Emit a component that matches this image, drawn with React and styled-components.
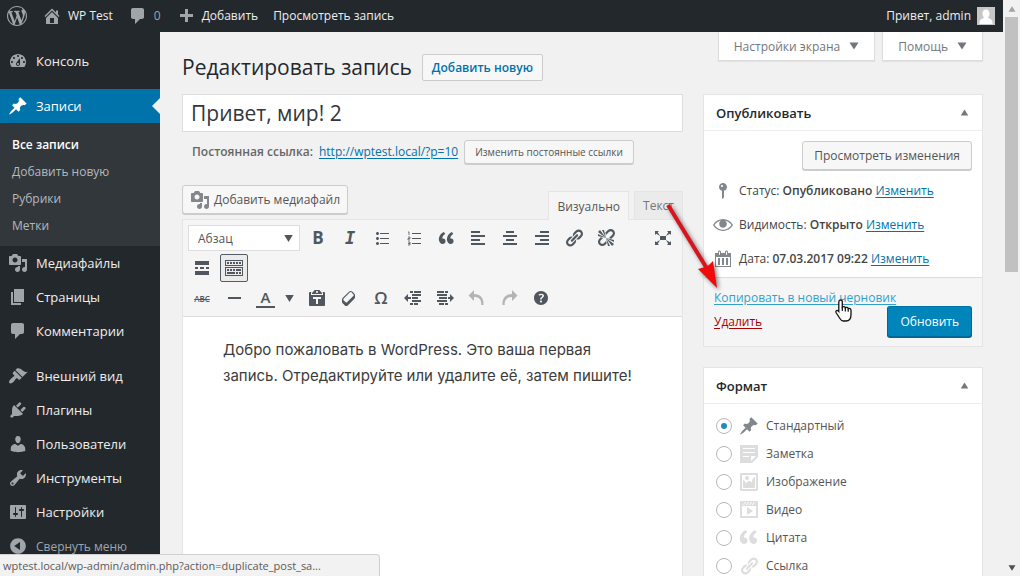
import React from "react";
import styled, { createGlobalStyle, css } from "styled-components";

const UI = `"Open Sans", "Noto Sans", sans-serif`;

const GlobalStyle = createGlobalStyle`
  *, *::before, *::after { box-sizing: border-box; }
  html, body { margin: 0; }
  body { background: #f1f1f1; color: #444; font: 12px/18px ${UI}; }
  button, input, select { font-family: inherit; margin: 0; }
  h1, h2, p, ul { margin: 0; padding: 0; font-weight: 400; }
  ul { list-style: none; }
  a { color: #0073aa; text-underline-offset: 2px; }
`;

/* ---------- icons (20 x 20 grid) ---------- */
const PATHS = {
  wordpress:
    "M20 10c0-5.51-4.49-10-10-10C4.48 0 0 4.49 0 10c0 5.52 4.48 10 10 10 5.51 0 10-4.48 10-10zM7.78 15.37L4.37 6.22c.55-.02 1.17-.08 1.17-.08.5-.06.44-1.13-.06-1.11 0 0-1.45.11-2.37.11-.18 0-.37 0-.58-.01C4.12 2.69 6.87 1.11 10 1.11c2.33 0 4.45.87 6.05 2.34-.68-.11-1.65.39-1.65 1.58 0 .74.45 1.36.9 2.1.35.61.55 1.36.55 2.46 0 1.49-1.4 5-1.4 5l-3.03-8.37c.54-.02.82-.17.82-.17.5-.05.44-1.25-.06-1.22 0 0-1.44.12-2.38.12-.87 0-2.33-.12-2.33-.12-.5-.03-.56 1.2-.06 1.22l.92.08 1.26 3.41zM17.41 10c.24-.64.74-1.87.43-4.25.7 1.29 1.05 2.71 1.05 4.25 0 3.29-1.73 6.24-4.4 7.78.97-2.59 1.94-5.2 2.92-7.78zM6.1 18.09C3.12 16.65 1.11 13.53 1.11 10c0-1.3.23-2.48.72-3.59C3.25 10.3 4.67 14.2 6.1 18.09zm4.03-6.63l2.58 6.98c-.86.29-1.76.45-2.71.45-.79 0-1.57-.11-2.29-.33.81-2.38 1.62-4.74 2.42-7.1z",
  home: "M16 8.5l1.53 1.53-1.06 1.06L10 4.6l-6.47 6.49-1.06-1.06L10 2.5l4 4v-2h2v4zm-6-2.46l6 5.99V18H4v-5.97zM12 17v-5H8v5h4z",
  comments: "M5 2h9c1.1 0 2 .9 2 2v7c0 1.1-.9 2-2 2h-2l-5 5v-5H5c-1.1 0-2-.9-2-2V4c0-1.1.9-2 2-2z",
  plus: "M17 8v3h-5v5H9v-5H4V8h5V3h3v5h5z",
  dashboard:
    "M3.76 16h12.48c1.1-1.37 1.76-3.11 1.76-5 0-4.42-3.58-8-8-8s-8 3.58-8 8c0 1.89.66 3.63 1.76 5zM10 4c.55 0 1 .45 1 1s-.45 1-1 1-1-.45-1-1 .45-1 1-1zM6 6c.55 0 1 .45 1 1s-.45 1-1 1-1-.45-1-1 .45-1 1-1zm8 0c.55 0 1 .45 1 1s-.45 1-1 1-1-.45-1-1 .45-1 1-1zm-5.37 5.55L12 7v6c0 1.1-.9 2-2 2s-2-.9-2-2c0-.57.24-1.08.63-1.45zM4 10c.55 0 1 .45 1 1s-.45 1-1 1-1-.45-1-1 .45-1 1-1zm12 0c.55 0 1 .45 1 1s-.45 1-1 1-1-.45-1-1 .45-1 1-1zm-5 3c0-.55-.45-1-1-1s-1 .45-1 1 .45 1 1 1 1-.45 1-1z",
  post: "M10.44 3.02l1.82-1.82 6.36 6.35-1.83 1.82c-1.05-.68-2.48-.57-3.41.36l-.75.75c-.92.93-1.04 2.35-.35 3.41l-1.83 1.82-2.41-2.41-2.8 2.79c-.42.42-3.38 2.71-3.8 2.29s1.86-3.39 2.28-3.81l2.79-2.79L4.1 9.36l1.83-1.82c1.05.69 2.48.57 3.4-.36l.75-.75c.93-.92 1.05-2.35.36-3.41z",
  media:
    "M13 11V4c0-.55-.45-1-1-1h-1.67L9 1H5L3.67 3H2c-.55 0-1 .45-1 1v7c0 .55.45 1 1 1h10c.55 0 1-.45 1-1zM7 4.5c1.38 0 2.5 1.12 2.5 2.5S8.38 9.5 7 9.5 4.5 8.38 4.5 7 5.62 4.5 7 4.5zM14 6h5v10.5c0 1.38-1.12 2.5-2.5 2.5S14 17.88 14 16.5s1.12-2.5 2.5-2.5c.17 0 .34.02.5.05V9h-3V6zm-4 8.05V13h2v3.5c0 1.38-1.12 2.5-2.5 2.5S7 17.88 7 16.5 8.12 14 9.5 14c.17 0 .34.02.5.05z",
  page: "M6 15V2h10v13H6zm-1 1h8v2H3V5h2v11z",
  appearance:
    "M14.48 11.06L7.41 3.99l1.5-1.5c.5-.56 2.3-.47 3.51.32 1.21.8 1.43 1.28 2.91 2.1 1.18.64 2.45 1.26 4.45.85zm-.71.71L6.7 4.7 4.93 6.47c-.39.39-.39 1.02 0 1.41l1.06 1.06c.39.39.39 1.03 0 1.42-.6.6-1.43 1.11-2.21 1.69-.35.26-.7.53-1.01.84C1.43 14.23.4 16.08 1.4 17.07c.99 1 2.84-.03 4.18-1.36.31-.31.58-.66.85-1.02.57-.78 1.08-1.61 1.69-2.21.39-.39 1.02-.39 1.41 0l1.06 1.06c.39.39 1.02.39 1.41 0z",
  plugins:
    "M13.11 4.36L9.87 7.6 8 5.73l3.24-3.24c.35-.34 1.05-.2 1.56.32.52.51.66 1.21.31 1.55zm-8 1.77l.91-1.12 9.01 9.01-1.19.84c-.71.71-2.63 1.16-3.82 1.16H6.14L4.9 17.26c-.59.59-1.54.59-2.12 0-.59-.58-.59-1.53 0-2.12l1.24-1.24v-3.88c0-1.13.4-3.19 1.09-3.89zm7.26 3.97l3.24-3.24c.34-.35 1.04-.21 1.55.31.52.51.66 1.21.31 1.55l-3.24 3.25z",
  users:
    "M10 9.25c-2.27 0-2.73-3.44-2.73-3.44C7 4.02 7.82 2 9.97 2c2.16 0 2.98 2.02 2.71 3.81 0 0-.41 3.44-2.68 3.44zm0 2.57L12.72 10c2.39 0 4.52 2.33 4.52 4.53v2.49s-3.65 1.13-7.24 1.13c-3.65 0-7.24-1.13-7.24-1.13v-2.49c0-2.25 1.94-4.48 4.47-4.48z",
  tools:
    "M16.68 9.77c-1.34 1.34-3.3 1.67-4.95.99l-5.41 6.52c-.99.99-2.59.99-3.58 0s-.99-2.59 0-3.57l6.52-5.42c-.68-1.65-.35-3.61.99-4.95 1.28-1.28 3.12-1.62 4.72-1.06l-2.89 2.89 2.82 2.82 2.86-2.87c.53 1.58.18 3.39-1.08 4.65zM3.81 16.21c.4.39 1.04.39 1.43 0 .4-.4.4-1.04 0-1.43-.39-.4-1.03-.4-1.43 0-.39.39-.39 1.03 0 1.43z",
  settings:
    "M18 16V4c0-.55-.45-1-1-1H3c-.55 0-1 .45-1 1v12c0 .55.45 1 1 1h14c.55 0 1-.45 1-1zM8 11h1c.55 0 1 .45 1 1s-.45 1-1 1H8v1.5c0 .28-.22.5-.5.5s-.5-.22-.5-.5V13H6c-.55 0-1-.45-1-1s.45-1 1-1h1V5.5c0-.28.22-.5.5-.5s.5.22.5.5V11zm5-2h-1c-.55 0-1-.45-1-1s.45-1 1-1h1V5.5c0-.28.22-.5.5-.5s.5.22.5.5V7h1c.55 0 1 .45 1 1s-.45 1-1 1h-1v5.5c0 .28-.22.5-.5.5s-.5-.22-.5-.5V9z",
  collapse: "M10 2.16c4.33 0 7.84 3.51 7.84 7.84s-3.51 7.84-7.84 7.84S2.16 14.33 2.16 10 5.71 2.16 10 2.16zm2 11.72V6.12L6.18 9.97z",
  ul: "M5.5 7C4.67 7 4 6.33 4 5.5 4 4.68 4.67 4 5.5 4 6.32 4 7 4.68 7 5.5 7 6.33 6.32 7 5.5 7zM8 5h9v1H8V5zm-2.5 7c-.83 0-1.5-.67-1.5-1.5C4 9.68 4.67 9 5.5 9c.82 0 1.5.68 1.5 1.5 0 .83-.68 1.5-1.5 1.5zM8 10h9v1H8v-1zm-2.5 7c-.83 0-1.5-.67-1.5-1.5 0-.82.67-1.5 1.5-1.5.82 0 1.5.68 1.5 1.5 0 .83-.68 1.5-1.5 1.5zM8 15h9v1H8v-1z",
  quote:
    "M9.49 13.22c0-.74-.2-1.38-.61-1.9-.62-.78-1.83-.88-2.53-.72-.29-1.65 1.11-3.75 2.92-4.65L7.88 4c-2.73 1.3-5.42 4.28-4.96 8.05C3.21 14.43 4.59 16 6.54 16c.85 0 1.56-.25 2.12-.75s.83-1.18.83-2.03zm8.05 0c0-.74-.2-1.38-.61-1.9-.63-.78-1.83-.88-2.53-.72-.29-1.65 1.11-3.75 2.92-4.65L15.93 4c-2.73 1.3-5.41 4.28-4.95 8.05.29 2.38 1.66 3.95 3.61 3.95.85 0 1.56-.25 2.12-.75s.83-1.18.83-2.03z",
  left: "M12 5V3H3v2h9zm5 4V7H3v2h14zm-5 4v-2H3v2h9zm5 4v-2H3v2h14z",
  center: "M14 5V3H6v2h8zm3 4V7H3v2h14zm-3 4v-2H6v2h8zm3 4v-2H3v2h14z",
  right: "M17 5V3H8v2h9zm0 4V7H3v2h14zm0 4v-2H8v2h9zm0 4v-2H3v2h14z",
  link: "M17.74 2.76c1.68 1.69 1.68 4.41 0 6.1l-1.53 1.52c-1.12 1.12-2.7 1.47-4.14 1.09l2.62-2.61.76-.77.76-.76c.84-.84.84-2.2 0-3.04-.84-.85-2.2-.85-3.04 0l-.77.76-3.38 3.38c-.37-1.44-.02-3.02 1.1-4.14l1.52-1.53c1.69-1.68 4.42-1.68 6.1 0zM8.59 13.43l5.34-5.34c.42-.42.42-1.1 0-1.52-.44-.43-1.13-.39-1.53 0l-5.33 5.34c-.42.42-.42 1.1 0 1.52.44.43 1.13.39 1.52 0zm-.76 2.29l4.14-4.15c.38 1.44.03 3.02-1.09 4.14l-1.52 1.53c-1.69 1.68-4.41 1.68-6.1 0-1.68-1.68-1.68-4.42 0-6.1l1.53-1.52c1.12-1.12 2.7-1.47 4.14-1.1l-4.14 4.15c-.85.84-.85 2.2 0 3.05.84.84 2.2.84 3.04 0z",
  unlink:
    "M17.74 2.26c1.68 1.69 1.68 4.41 0 6.1l-1.53 1.52c-.32.33-.69.58-1.08.77L13 10l1.69-1.64.76-.77.76-.76c.84-.84.84-2.2 0-3.04-.84-.85-2.2-.85-3.04 0l-.77.76-.76.76L10 7l-.65-2.14c.19-.38.44-.75.77-1.07l1.52-1.53c1.69-1.68 4.42-1.68 6.1 0zM2 4l8 6-6-8zm4-2l4 8-2-8H6zM2 6l8 4-8-2V6zm7.36 7.69L10 13l.74 2.35-1.38 1.39c-1.69 1.68-4.41 1.68-6.1 0-1.68-1.68-1.68-4.42 0-6.1l1.39-1.38L7 10l-.69.64-1.52 1.53c-.85.84-.85 2.2 0 3.04.84.85 2.2.85 3.04 0zM18 16l-8-6 6 8zm-4 2l-4-8 2 8h2zm4-4l-8-4 8 2v2z",
  more: "M17 7V3H3v4h14zM6 11V9H3v2h3zm6 0V9H8v2h4zm5 0V9h-3v2h3zm0 6v-4H3v4h14z",
  sink: "M19 2v6H1V2h18zm-1 5V3H2v4h16zM5 4v2H3V4h2zm3 0v2H6V4h2zm3 0v2H9V4h2zm3 0v2h-2V4h2zm3 0v2h-2V4h2zm2 5v9H1V9h18zm-1 8v-7H2v7h16zM5 11v2H3v-2h2zm3 0v2H6v-2h2zm3 0v2H9v-2h2zm6 0v2h-5v-2h5zm-6 3v2H3v-2h8zm3 0v2h-2v-2h2zm3 0v2h-2v-2h2z",
  hr: "M4 9h13v2H4z",
  paste:
    "M12.38 2L15 5v1H5V5l2.64-3h4.74zM10 5c.55 0 1-.44 1-1 0-.55-.45-1-1-1s-1 .45-1 1c0 .56.45 1 1 1zm5.45-1H17c.55 0 1 .45 1 1v12c0 .56-.45 1-1 1H3c-.55 0-1-.44-1-1V5c0-.55.45-1 1-1h1.55L4 4.63V7h12V4.63zM14 11V9H6v2h3v5h2v-5h3z",
  eraser:
    "M14.29 4.59l1.1 1.11c.41.4.61.94.61 1.47v2.12c0 .53-.2 1.07-.61 1.47l-6.63 6.63c-.4.41-.94.61-1.47.61s-1.07-.2-1.47-.61l-1.11-1.1-1.1-1.11c-.41-.4-.61-.94-.61-1.47v-2.12c0-.54.2-1.07.61-1.48l6.63-6.62c.4-.41.94-.61 1.47-.61s1.06.2 1.47.61zm-6.21 9.7l6.42-6.42c.39-.39.39-1.03 0-1.43L12.36 4.3c-.19-.19-.45-.29-.72-.29s-.52.1-.71.29l-6.42 6.42c-.39.4-.39 1.04 0 1.43l2.14 2.14c.38.38 1.04.38 1.43 0z",
  outdent:
    "M7 3h3v2H7zM11 3h7v2h-7zM9 6h9v2H9zM9 9h6v2H9zM9 12h9v2H9zM7 15h3v2H7zM11 15h4v2h-4zM5 6v3h3v2H5v3l-4-4z",
  indent:
    "M2 3h7v2H2zM10 3h3v2h-3zM2 6h10v2H2zM4 9h8v2H4zM2 12h10v2H2zM4 15h5v2H4zM10 15h3v2h-3zM15 6v3h-2v2h2v3l4-4z",
  undo: "M7 2v4c6 0 10 3.500 9.500 11h-2.200C14.500 11.500 12 9 7 9v4L1.500 7.500z",
  redo: "M13 2v4c-6 0-10 3.500-9.500 11h2.200C5.500 11.500 8 9 13 9v4l5.500-5.500z",
  help: "M17 10c0-3.87-3.14-7-7-7-3.87 0-7 3.13-7 7s3.13 7 7 7c3.86 0 7-3.13 7-7zm-6.3 1.48H9.14v-.43c0-.38.08-.7.24-.98s.46-.57.88-.89c.41-.29.68-.53.81-.71.14-.18.2-.39.2-.62 0-.25-.09-.44-.28-.58-.19-.13-.45-.19-.79-.19-.58 0-1.25.19-2 .57l-.64-1.28c.87-.49 1.8-.74 2.77-.74.81 0 1.45.2 1.92.58.48.39.71.91.71 1.55 0 .43-.09.8-.29 1.11-.19.32-.57.67-1.11 1.06-.38.28-.61.49-.71.63-.1.15-.15.34-.15.57v.35zm-1.47 2.74c-.18-.17-.27-.42-.27-.73 0-.33.08-.58.26-.75s.43-.25.77-.25c.32 0 .57.09.75.26s.27.42.27.74c0 .3-.09.55-.27.72-.18.18-.43.27-.75.27-.33 0-.58-.09-.76-.26z",
  expand:
    "M7 8h6v4H7zM2 13v4h4l-1.200-1.200L7 12l-3.800 2.200zM14 17h4v-4l-1.200 1.200L13 12l2.200 3.800zM14 3l1.300 1.300L13 8l3.800-2.200L18 7V3zM6 3H2v4l1.200-1.200L7 8 4.700 4.300z",
  pin: "M14 6c0 1.86-1.28 3.41-3 3.86V16c0 1-2 2-2 2V9.86c-1.72-.45-3-2-3-3.86 0-2.21 1.79-4 4-4s4 1.79 4 4zM8 5c0 .55.45 1 1 1s1-.45 1-1-.45-1-1-1-1 .45-1 1z",
  eye: "M19.7 9.4C17.7 6 14 3.900 10 3.900S2.300 6 .3 9.400L0 10l.3.600c2 3.400 5.700 5.500 9.700 5.500s7.700-2.100 9.700-5.500l.3-.600zM10 14.800c-3.300 0-6.600-1.800-8.500-4.800C3 7.600 5.300 6 8 5.400 6.900 6.200 6.200 7.500 6.200 9c0 2.100 1.700 3.800 3.800 3.800s3.800-1.700 3.800-3.800c0-1.500-.7-2.800-1.800-3.600 2.700.6 5 2.200 6.500 4.600-1.900 3-5.200 4.800-8.500 4.800z",
  calendar:
    "M15 4h3v14H2V4h3V3c0-.83.67-1.500 1.500-1.500S8 2.170 8 3v1h4V3c0-.83.67-1.500 1.500-1.500S15 2.170 15 3v1zM6 3v2.500c0 .28.22.5.5.5s.5-.22.5-.5V3c0-.28-.22-.5-.5-.5S6 2.720 6 3zm7 0v2.500c0 .28.22.5.5.5s.5-.22.5-.5V3c0-.28-.22-.5-.5-.5s-.5.22-.5.5zm4 14V8H3v9h14zM7 16V9H5v7h2zm4 0V9H9v7h2zm4 0V9h-2v7h2z",
  aside: "M1 1h18v12l-6 6H1V1zm3 3v1h12V4H4zm0 4v1h12V8H4zm6 5v-1H4v1h6zm2 4l5-5h-5v5z",
  image:
    "M2.250 1h15.500c.69 0 1.250.56 1.250 1.250v15.500c0 .69-.56 1.250-1.250 1.250H2.250C1.560 19 1 18.440 1 17.750V2.250C1 1.560 1.560 1 2.250 1zM17 17V3H3v14h14zM10 6c0-1.100-.9-2-2-2s-2 .9-2 2 .9 2 2 2 2-.9 2-2zm3 5s0-6 3-6v10c0 .55-.45 1-1 1H5c-.55 0-1-.45-1-1V8c2 0 3 4 3 4s1-3 3-3 3 2 3 2z",
  video:
    "M2 1h16c.55 0 1 .45 1 1v16l-18-.02V2c0-.55.45-1 1-1zm4 1L4 5h1l2-3H6zm4 0H9L7 5h1zm3 0h-1l-2 3h1zm3 0h-1l-2 3h1zm1 14V6H3v10h14zM8 7l6 4-6 4V7z",
  cite: "M8.540 12.740c0-.87-.24-1.610-.72-2.220-.73-.92-2.140-1.030-2.960-.85-.34-1.930 1.300-4.390 3.420-5.450L6.650 1.940C3.450 3.460.31 6.960.85 11.370 1.190 14.160 2.800 16 5.080 16c1 0 1.830-.29 2.480-.88.66-.59.98-1.380.98-2.380zm9.430 0c0-.87-.24-1.610-.72-2.220-.73-.92-2.140-1.030-2.960-.85-.34-1.930 1.300-4.390 3.420-5.450l-1.630-2.280c-3.200 1.520-6.340 5.020-5.800 9.430.34 2.790 1.950 4.630 4.230 4.630 1 0 1.830-.29 2.480-.88.66-.59.98-1.380.98-2.380z",
  down: "M5 6h10l-5 8z",
  up: "M5 14h10l-5-8z",
};

const Svg = styled.svg`
  display: block;
  flex: none;
  width: ${(p) => p.$size}px;
  height: ${(p) => p.$size}px;
  fill: currentColor;
`;

const Icon = ({ name, size = 20 }) => (
  <Svg viewBox="0 0 20 20" $size={size} aria-hidden="true">
    <path fillRule="evenodd" d={PATHS[name]} />
  </Svg>
);

const NumberedIcon = () => (
  <Svg viewBox="0 0 20 20" $size={20} aria-hidden="true">
    <path d="M8 5h9v1H8zM8 10h9v1H8zM8 15h9v1H8z" />
    <path d="M4 4h1v3M4 9h2v1.500H4V12h2M4 14h2v3H4M4 15.500h2" fill="none" stroke="currentColor" strokeWidth=".8" />
  </Svg>
);

/* ---------- window ---------- */
const Window = styled.div`
  display: grid;
  grid-template-columns: minmax(0, 1fr) 17px;
  height: 100vh;
  overflow: hidden;
`;

const Page = styled.div`
  display: flex;
  flex-direction: column;
  min-height: 0;
`;

const ScrollTrack = styled.div`
  display: grid;
  grid-template-rows: 17px 1fr 17px;
  justify-items: center;
  align-items: center;
  background: #f1f1f1;
  color: #505050;
  svg:first-child { color: #a3a3a3; }
`;

const ScrollThumb = styled.div`
  align-self: start;
  width: 13px;
  height: 47%;
  background: #c1c1c1;
`;

const StatusBubble = styled.div`
  position: fixed;
  left: 0;
  bottom: 0;
  width: 380px;
  height: 22px;
  padding: 0 3px;
  overflow: hidden;
  white-space: nowrap;
  font-size: 11px;
  line-height: 21px;
  color: #5a5a5a;
  background: #f2f2f2;
  border: solid #d0d0d0;
  border-width: 1px 1px 0 0;
  border-radius: 0 4px 0 0;
`;

/* ---------- admin bar ---------- */
const AdminBar = styled.header`
  display: flex;
  flex: none;
  align-items: center;
  height: 32px;
  padding: 0 8px 0 7px;
  color: #eee;
  background: #23282d;
`;

const BarLink = styled.a`
  display: flex;
  align-items: center;
  gap: 6px;
  margin-right: 15px;
  color: ${(p) => (p.$dim ? "#9ea3a8" : "#eee")};
  text-decoration: none;
  white-space: nowrap;
  > svg { color: #a0a5aa; }
`;

const Account = styled(BarLink)`
  margin: 0 0 0 auto;
`;

const Avatar = styled.svg`
  width: 18px;
  height: 18px;
  background: #c6c6c6;
`;

/* ---------- side menu ---------- */
const Body = styled.div`
  display: flex;
  flex: 1;
  min-height: 0;
`;

const Sidebar = styled.nav`
  flex: none;
  width: 160px;
  padding-top: 12px;
  background: #23282d;
`;

const Separator = styled.div`
  height: 11px;
`;

const MenuLink = styled.a`
  position: relative;
  display: flex;
  align-items: center;
  gap: 8px;
  height: 34px;
  padding-left: 8px;
  font-size: 13px;
  text-decoration: none;
  color: #eee;
  svg { color: #a0a5aa; }
  ${(p) =>
    p.$current &&
    css`
      color: #fff;
      background: #0073aa;
      svg { color: #fff; }
      &::after {
        content: "";
        position: absolute;
        right: 0;
        top: 9px;
        border: 8px solid transparent;
        border-right-color: #f1f1f1;
        border-left-width: 0;
      }
    `}
`;

const CollapseButton = styled(MenuLink).attrs({ as: "button", type: "button" })`
  width: 100%;
  border: 0;
  background: none;
  color: #a0a5aa;
  font-size: 12px;
`;

const Submenu = styled.ul`
  padding: 8px 0 7px;
  background: #32373c;
`;

const SubLink = styled.a`
  display: block;
  padding-left: 12px;
  font-size: 12px;
  line-height: 27px;
  text-decoration: none;
  color: ${(p) => (p.$current ? "#fff" : "#b4b9be")};
  font-weight: ${(p) => (p.$current ? 600 : 400)};
`;

/* ---------- main column ---------- */
const Main = styled.main`
  display: flex;
  flex: 1;
  flex-direction: column;
  min-width: 0;
  padding: 0 20px 0 22px;
`;

const TopRow = styled.div`
  display: flex;
  flex: none;
  align-items: flex-start;
  justify-content: space-between;
  height: 62px;
`;

const Heading = styled.div`
  display: flex;
  align-items: center;
  gap: 10px;
  padding-top: 21px;
  white-space: nowrap;
  h1 { font-size: 21px; line-height: 28px; color: #23282d; }
`;

const AddNew = styled.a`
  padding: 0 9px;
  border: 1px solid #ccc;
  border-radius: 2px;
  background: #f7f7f7;
  font-weight: 600;
  line-height: 25px;
  text-decoration: none;
`;

const MetaTabs = styled.div`
  display: flex;
  gap: 7px;
`;

const MetaTab = styled.button`
  display: flex;
  align-items: center;
  gap: 5px;
  height: 29px;
  padding: 0 11px 0 15px;
  border: solid #ddd;
  border-width: 0 1px 1px;
  background: #fff;
  box-shadow: 0 1px 1px rgba(0, 0, 0, 0.06);
  color: #72777c;
  font-size: 12px;
  white-space: nowrap;
`;

const Columns = styled.div`
  display: grid;
  flex: 1;
  grid-template-columns: minmax(0, 1fr) 280px;
  gap: 20px;
  min-height: 0;
`;

const EditColumn = styled.div`
  display: flex;
  flex-direction: column;
  min-height: 0;
`;

const TitleInput = styled.input`
  flex: none;
  width: 100%;
  height: 38px;
  padding: 0 8px;
  border: 1px solid #ddd;
  background: #fff;
  color: #32373c;
  font-size: 21px;
  outline: 0;
`;

const Permalink = styled.div`
  display: flex;
  align-items: center;
  gap: 6px;
  padding: 8px 10px 21px;
  white-space: nowrap;
  color: #666;
  strong { font-weight: 600; }
`;

const Button = styled.button`
  display: flex;
  align-items: center;
  gap: 4px;
  height: 29px;
  padding: 0 11px;
  border: 1px solid #ccc;
  border-radius: 3px;
  background: #f7f7f7;
  box-shadow: 0 1px 0 #ccc;
  color: #555;
  font-size: 12px;
  white-space: nowrap;
`;

const SmallButton = styled(Button)`
  height: 24px;
  padding: 0 10px;
  font-size: 10px;
`;

const MediaButton = styled(Button)`
  padding: 0 7px;
  svg { color: #82878c; }
`;

const PrimaryButton = styled(Button)`
  height: 31px;
  padding: 0 12px;
  color: #fff;
  background: #0085ba;
  border-color: #0073aa #006799 #006799;
  box-shadow: 0 1px 0 #006799;
`;

const EditorHead = styled.div`
  display: flex;
  align-items: flex-end;
  justify-content: space-between;
`;

const MediaTools = styled.div`
  padding-bottom: 5px;
`;

const Tabs = styled.div`
  display: flex;
  gap: 5px;
`;

const Tab = styled.button`
  position: relative;
  height: ${(p) => (p.$active ? 29 : 28)}px;
  margin-bottom: ${(p) => (p.$active ? -1 : 0)}px;
  padding: 0 8px;
  border: 1px solid #e5e5e5;
  border-bottom: 0;
  background: ${(p) => (p.$active ? "#f5f5f5" : "#ebebeb")};
  color: ${(p) => (p.$active ? "#555" : "#777")};
  font-size: 12px;
`;

const Editor = styled.section`
  display: flex;
  flex: 1;
  flex-direction: column;
  border: 1px solid #e5e5e5;
  background: #fff;
`;

const Toolbar = styled.div`
  display: grid;
  gap: 2px;
  padding: 4px 5px;
  background: #f5f5f5;
  border-bottom: 1px solid #ddd;
`;

const ToolRow = styled.div`
  display: flex;
  gap: 4px;
`;

const ToolButton = styled.button`
  display: flex;
  align-items: center;
  justify-content: center;
  width: 28px;
  height: 28px;
  padding: 0;
  border: 1px solid transparent;
  border-radius: 2px;
  background: none;
  color: #50575e;
  opacity: ${(p) => (p.disabled ? 0.4 : 1)};
  margin-left: ${(p) => (p.$end ? "auto" : 0)};
  ${(p) =>
    p.$pressed &&
    css`
      border-color: #555d66;
      background: #ebebeb;
    `}
`;

const ColorButton = styled(ToolButton)`
  width: 47px;
  gap: 6px;
  justify-content: flex-start;
  padding-left: 3px;
`;

const Letter = styled.span`
  font: ${(p) => p.$font};
`;

const ColorLetter = styled.span`
  width: 20px;
  border-bottom: 2px solid #50575e;
  font: 600 15px/17px "Open Sans", sans-serif;
`;

const Struck = styled.span`
  font-size: 8px;
  font-weight: 600;
  text-decoration: line-through;
`;

const SelectBox = styled.div`
  display: grid;
  align-items: center;
  width: 112px;
  height: 26px;
  align-self: center;
  border: 1px solid #ddd;
  background: #fff;
  color: #555;
  > * { grid-area: 1 / 1; }
  svg { justify-self: end; margin-right: 2px; pointer-events: none; }
  select {
    appearance: none;
    width: 100%;
    height: 24px;
    padding: 0 9px;
    border: 0;
    background: none;
    color: inherit;
    font-size: 12px;
  }
`;

const Content = styled.div`
  padding: 20px 40px;
  color: #3c3c3c;
  font: 15px/26px Inter, "Liberation Sans", sans-serif;
`;

/* ---------- boxes at the right ---------- */
const BoxColumn = styled.div`
  display: flex;
  flex-direction: column;
  gap: 20px;
`;

const Box = styled.section`
  flex: none;
  border: 1px solid #e5e5e5;
  background: #fff;
`;

const BoxHead = styled.div`
  display: flex;
  align-items: center;
  justify-content: space-between;
  height: 36px;
  padding: 0 10px 0 12px;
  border-bottom: 1px solid #eee;
  h2 { font-size: 13px; font-weight: 600; color: #23282d; }
  button { padding: 0; border: 0; background: none; color: #72777c; }
`;

const BoxActions = styled.div`
  display: flex;
  justify-content: flex-end;
  padding: 10px 10px 4px;
`;

const InfoRow = styled.div`
  display: flex;
  align-items: center;
  gap: 6px;
  height: 34px;
  padding-left: 9px;
  white-space: nowrap;
  svg { color: #82878c; }
  strong { font-weight: 600; }
`;

const InfoList = styled.div`
  padding-bottom: 1px;
`;

const BoxFoot = styled.div`
  display: grid;
  grid-template-columns: 1fr auto;
  padding: 11px 10px 9px;
  border-top: 1px solid #ddd;
  background: #f5f5f5;
`;

const CopyLine = styled.div`
  position: relative;
  grid-column: 1 / -1;
  line-height: 17px;
  a { color: #2ea2cc; }
`;

const DeleteLink = styled.a`
  align-self: center;
  justify-self: start;
  color: #a00;
`;

const Arrow = styled.svg`
  position: absolute;
  left: -54px;
  top: -91px;
  width: 70px;
  height: 96px;
  filter: drop-shadow(2px 2px 2px rgba(0, 0, 0, 0.5));
  pointer-events: none;
`;

const Hand = styled.svg`
  position: absolute;
  left: 120px;
  top: 9px;
  width: 20px;
  height: 25px;
  z-index: 1;
  pointer-events: none;
`;

const FormatList = styled.div`
  padding: 8px 12px;
`;

const FormatLabel = styled.label`
  display: flex;
  align-items: center;
  gap: 7px;
  height: 28px;
  color: #555;
  svg { color: ${(p) => (p.$on ? "#82878c" : "#ddd")}; }
`;

const Radio = styled.input`
  appearance: none;
  display: grid;
  place-items: center;
  width: 16px;
  height: 16px;
  margin: 0;
  border: 1px solid #b4b9be;
  border-radius: 50%;
  background: #fff;
  &:checked::before {
    content: "";
    width: 6px;
    height: 6px;
    border-radius: 50%;
    background: #1e8cbe;
  }
`;

const MENU_A = [
  ["media", "Медиафайлы"],
  ["page", "Страницы"],
  ["comments", "Комментарии"],
];
const MENU_B = [
  ["appearance", "Внешний вид"],
  ["plugins", "Плагины"],
  ["users", "Пользователи"],
  ["tools", "Инструменты"],
  ["settings", "Настройки"],
];
const SUBMENU = ["Все записи", "Добавить новую", "Рубрики", "Метки"];
const FORMATS = [
  ["post", "Стандартный"],
  ["aside", "Заметка"],
  ["image", "Изображение"],
  ["video", "Видео"],
  ["cite", "Цитата"],
  ["link", "Ссылка"],
];
const INFO = [
  ["pin", "Статус", "Опубликовано"],
  ["eye", "Видимость", "Открыто"],
  ["calendar", "Дата", "07.03.2017 09:22"],
];

const MenuItem = ({ icon, children, ...rest }) => (
  <MenuLink href="#" {...rest}>
    <Icon name={icon} />
    {children}
  </MenuLink>
);

const Tool = ({ icon, label, children, ...rest }) => (
  <ToolButton type="button" aria-label={label} {...rest}>
    {icon ? <Icon name={icon} /> : children}
  </ToolButton>
);

const PostBox = ({ title, children }) => (
  <Box>
    <BoxHead>
      <h2>{title}</h2>
      <button type="button" aria-label="Свернуть">
        <Icon name="up" size={15} />
      </button>
    </BoxHead>
    {children}
  </Box>
);

export default function App() {
  return (
    <>
      <GlobalStyle />
      <Window>
        <Page>
          <AdminBar>
            <BarLink href="#" aria-label="WordPress"><Icon name="wordpress" /></BarLink>
            <BarLink href="#"><Icon name="home" />WP Test</BarLink>
            <BarLink href="#" $dim><Icon name="comments" />0</BarLink>
            <BarLink href="#"><Icon name="plus" />Добавить</BarLink>
            <BarLink href="#">Просмотреть запись</BarLink>
            <Account href="#">
              Привет, admin
              <Avatar viewBox="0 0 18 18" aria-hidden="true">
                <path d="M9 2.500c2.300 0 3.600 1.700 3.600 4 0 1.500-.6 2.900-1.500 3.700 0 1.500 4.400 1.700 4.400 5V17h-13v-1.800c0-3.300 4.400-3.500 4.400-5-.9-.8-1.500-2.200-1.500-3.700 0-2.300 1.300-4 3.600-4z" fill="#fff" />
              </Avatar>
            </Account>
          </AdminBar>
          <Body>
            <Sidebar>
              <MenuItem icon="dashboard">Консоль</MenuItem>
              <Separator />
              <MenuItem icon="post" $current>Записи</MenuItem>
              <Submenu>
                {SUBMENU.map((text, i) => (
                  <li key={text}><SubLink href="#" $current={i === 0}>{text}</SubLink></li>
                ))}
              </Submenu>
              {MENU_A.map(([icon, text]) => <MenuItem key={icon} icon={icon}>{text}</MenuItem>)}
              <Separator />
              {MENU_B.map(([icon, text]) => <MenuItem key={icon} icon={icon}>{text}</MenuItem>)}
              <CollapseButton><Icon name="collapse" />Свернуть меню</CollapseButton>
            </Sidebar>
            <Main>
              <TopRow>
                <Heading>
                  <h1>Редактировать запись</h1>
                  <AddNew href="#">Добавить новую</AddNew>
                </Heading>
                <MetaTabs>
                  <MetaTab type="button">Настройки экрана <Icon name="down" size={18} /></MetaTab>
                  <MetaTab type="button">Помощь <Icon name="down" size={18} /></MetaTab>
                </MetaTabs>
              </TopRow>
              <Columns>
                <EditColumn>
                  <TitleInput type="text" aria-label="Заголовок" defaultValue="Привет, мир! 2" />
                  <Permalink>
                    <strong>Постоянная ссылка:</strong>
                    <a href="#">http://wptest.local/?p=10</a>
                    <SmallButton type="button">Изменить постоянные ссылки</SmallButton>
                  </Permalink>
                  <EditorHead>
                    <MediaTools>
                      <MediaButton type="button"><Icon name="media" />Добавить медиафайл</MediaButton>
                    </MediaTools>
                    <Tabs>
                      <Tab type="button" $active>Визуально</Tab>
                      <Tab type="button">Текст</Tab>
                    </Tabs>
                  </EditorHead>
                  <Editor>
                    <Toolbar>
                      <ToolRow>
                        <SelectBox>
                          <select aria-label="Формат текста"><option>Абзац</option></select>
                          <Icon name="down" size={17} />
                        </SelectBox>
                        <Tool label="Жирный"><Letter $font={`700 17px/20px "Open Sans", sans-serif`}>B</Letter></Tool>
                        <Tool label="Курсив"><Letter $font={`italic 700 17px/20px "DejaVu Sans Mono", monospace`}>I</Letter></Tool>
                        <Tool icon="ul" label="Маркированный список" />
                        <Tool label="Нумерованный список"><NumberedIcon /></Tool>
                        <Tool icon="quote" label="Цитата" />
                        <Tool icon="left" label="По левому краю" />
                        <Tool icon="center" label="По центру" />
                        <Tool icon="right" label="По правому краю" />
                        <Tool icon="link" label="Вставить ссылку" />
                        <Tool icon="unlink" label="Удалить ссылку" />
                        <Tool icon="expand" label="На весь экран" $end />
                      </ToolRow>
                      <ToolRow>
                        <Tool icon="more" label="Тег «Далее»" />
                        <Tool icon="sink" label="Дополнительная панель" $pressed />
                      </ToolRow>
                      <ToolRow>
                        <Tool label="Зачёркнутый"><Struck>ABC</Struck></Tool>
                        <Tool icon="hr" label="Горизонтальная линия" />
                        <ColorButton type="button" aria-label="Цвет текста">
                          <ColorLetter>A</ColorLetter>
                          <Icon name="down" size={17} />
                        </ColorButton>
                        <Tool icon="paste" label="Вставить как текст" />
                        <Tool icon="eraser" label="Очистить форматирование" />
                        <Tool label="Произвольный символ"><Letter $font={`600 17px/20px "Open Sans", sans-serif`}>Ω</Letter></Tool>
                        <Tool icon="outdent" label="Уменьшить отступ" />
                        <Tool icon="indent" label="Увеличить отступ" />
                        <Tool icon="undo" label="Отменить" disabled />
                        <Tool icon="redo" label="Повторить" disabled />
                        <Tool icon="help" label="Горячие клавиши" />
                      </ToolRow>
                    </Toolbar>
                    <Content>
                      <p>Добро пожаловать в WordPress. Это ваша первая запись. Отредактируйте или удалите её, затем пишите!</p>
                    </Content>
                  </Editor>
                </EditColumn>
                <BoxColumn>
                  <PostBox title="Опубликовать">
                    <BoxActions>
                      <Button type="button">Просмотреть изменения</Button>
                    </BoxActions>
                    <InfoList>
                      {INFO.map(([icon, name, value]) => (
                        <InfoRow key={icon}>
                          <Icon name={icon} />
                          <span>{name}: <strong>{value}</strong> <a href="#">Изменить</a></span>
                        </InfoRow>
                      ))}
                    </InfoList>
                    <BoxFoot>
                      <CopyLine>
                        <a href="#">Копировать в новый черновик</a>
                        <Arrow viewBox="0 0 70 96" aria-hidden="true">
                          <path d="M8 7L46 69" stroke="#d8141c" strokeWidth="4" fill="none" />
                          <path d="M57 90L38 71l7-2 4-2 4-4z" fill="#f00a0a" />
                        </Arrow>
                        <Hand viewBox="0 0 20 25" aria-hidden="true">
                          <path d="M6.500 2c1.200 0 1.800.8 1.800 1.900v5.200c.8-.9 2.700-.7 3 .7.900-.8 2.600-.4 2.900.8 1.200-.6 2.800.1 2.800 1.700v4.500c0 3.400-1.700 6.200-5.200 6.200H9.500c-1.800 0-2.800-1.100-3.600-2.500L2 14.500c-.8-1.400.9-2.700 2.100-1.600l.7.7V3.900C4.800 2.800 5.400 2 6.500 2z" fill="#fff" stroke="#111" strokeWidth="1.300" />
                          <path d="M8.300 9v4M11.300 10v3.500M14.200 10.800v3" stroke="#111" strokeWidth="1.200" />
                        </Hand>
                      </CopyLine>
                      <DeleteLink href="#">Удалить</DeleteLink>
                      <PrimaryButton type="button">Обновить</PrimaryButton>
                    </BoxFoot>
                  </PostBox>
                  <PostBox title="Формат">
                    <FormatList>
                      {FORMATS.map(([icon, text], i) => (
                        <FormatLabel key={icon} $on={i === 0}>
                          <Radio type="radio" name="format" defaultChecked={i === 0} />
                          <Icon name={icon} />
                          {text}
                        </FormatLabel>
                      ))}
                    </FormatList>
                  </PostBox>
                </BoxColumn>
              </Columns>
            </Main>
          </Body>
        </Page>
        <ScrollTrack>
          <Icon name="up" size={14} />
          <ScrollThumb />
          <Icon name="down" size={14} />
        </ScrollTrack>
      </Window>
      <StatusBubble>wptest.local/wp-admin/admin.php?action=duplicate_post_sa...</StatusBubble>
    </>
  );
}
